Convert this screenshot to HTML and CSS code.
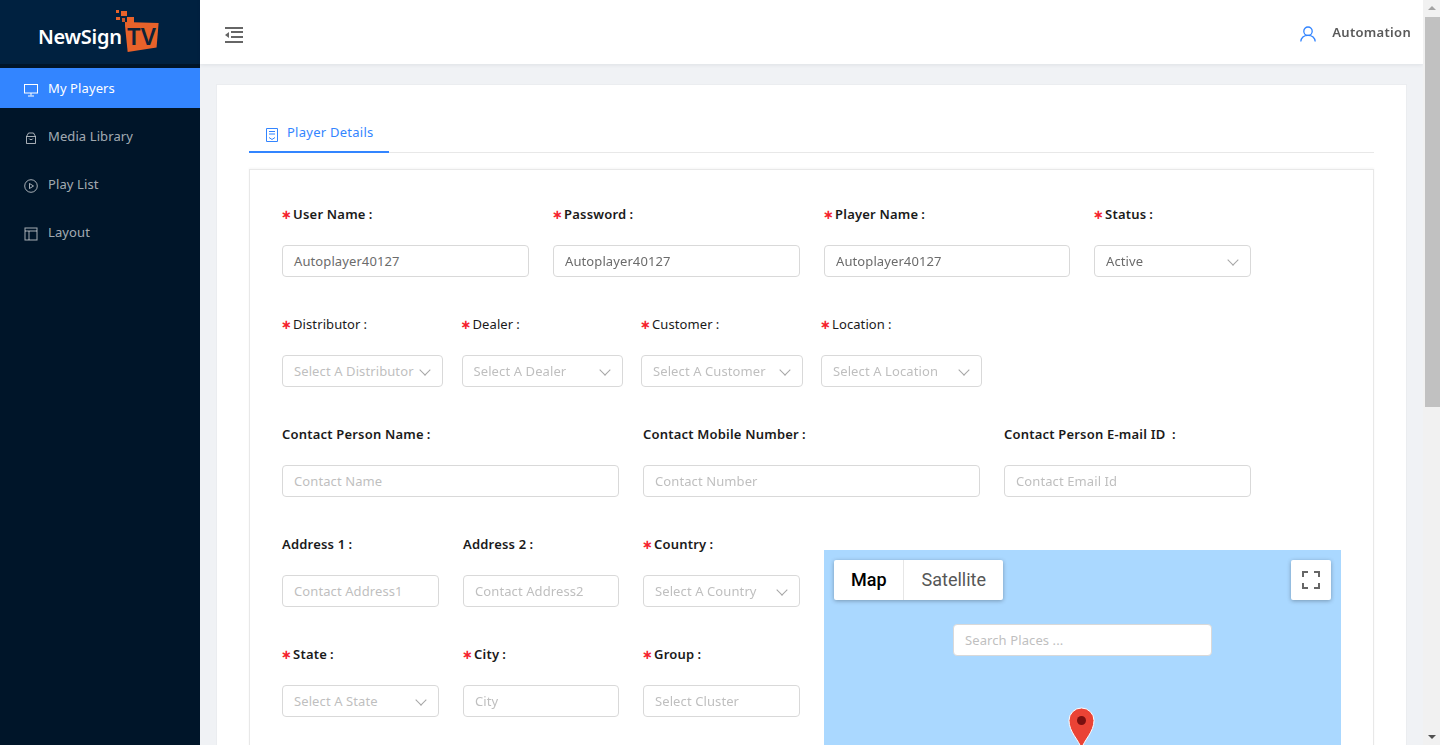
FILE: index.html
```html
<!DOCTYPE html>
<html lang="en">
<head>
    <meta charset="UTF-8">
    <meta name="viewport" content="width=device-width, initial-scale=1.0">
    <title>Player Details</title>
    <link rel="stylesheet" href="styles.css">
</head>
<body>
    <aside class="sider">
        <div class="logo">
            <span class="logo-name">NewSign</span>
            <span class="logo-badge">TV</span>
            <svg class="logo-dots" width="18" height="14" viewBox="0 0 18 14">
                <rect x="0" y="0" width="3" height="3" fill="#e8622a"/>
                <rect x="5" y="1" width="6" height="5" fill="#e8622a"/>
                <rect x="0" y="7" width="4" height="3" fill="#e8622a"/>
                <rect x="6" y="8" width="3" height="4" fill="#c9562a"/>
                <rect x="11" y="7" width="7" height="7" fill="#e8622a"/>
            </svg>
        </div>
        <ul class="menu">
            <li class="menu-item active">
                <svg width="14" height="14" viewBox="0 0 14 14" fill="none" stroke="currentColor"><rect x=".5" y="1.5" width="13" height="8.5"/><path d="M7 10v2.500M4 13h6"/></svg>
                <span>My Players</span>
            </li>
            <li class="menu-item">
                <svg width="14" height="14" viewBox="0 0 14 14" fill="none" stroke="currentColor"><path d="M2.500 5.500h9v7h-9zM2.500 5.500L4.500 2h5l2 3.500M5 7.500c.5 1.500 3.500 1.500 4 0"/></svg>
                <span>Media Library</span>
            </li>
            <li class="menu-item">
                <svg width="14" height="14" viewBox="0 0 14 14" fill="none" stroke="currentColor"><circle cx="7" cy="7" r="6.300"/><path d="M5.500 4.500L9.500 7l-4 2.500z"/></svg>
                <span>Play List</span>
            </li>
            <li class="menu-item">
                <svg width="14" height="14" viewBox="0 0 14 14" fill="none" stroke="currentColor"><rect x="1" y="1" width="12" height="12"/><path d="M1 4h12M5 4v9"/></svg>
                <span>Layout</span>
            </li>
        </ul>
    </aside>

    <div class="main">
        <header class="topbar">
            <svg class="fold-icon" width="18" height="16" viewBox="0 0 18 16" fill="#666"><path d="M0 0h18v2H0zM6 4h12v2H6zM6 9h12v2H6zM0 14h18v2H0zM0 8l4-3v6z"/></svg>
            <div class="user">
                <svg width="16" height="16" viewBox="0 0 16 16" fill="none" stroke="#3385ff" stroke-width="1.300"><circle cx="8" cy="5.200" r="4.200"/><path d="M.8 15.500c.4-4 3-6.200 7.200-6.200s6.800 2.200 7.200 6.200"/></svg>
                <span>Automation</span>
            </div>
        </header>

        <section class="content">
            <div class="tabs">
                <div class="tab">
                    <svg width="12" height="14" viewBox="0 0 12 14" fill="none" stroke="#3385ff"><path d="M.5.500h11v13H.5zM3 3.500h6M3 6h6M3 9.500l3 2 3-2"/></svg>
                    <span>Player Details</span>
                </div>
            </div>

            <form class="panel">
                <div class="row row-main">
                    <div class="field"><label class="bold req">User Name<i>:</i></label><div class="input filled">Autoplayer40127</div></div>
                    <div class="field"><label class="bold req">Password<i>:</i></label><div class="input filled">Autoplayer40127</div></div>
                    <div class="field"><label class="bold req">Player Name<i>:</i></label><div class="input filled">Autoplayer40127</div></div>
                    <div class="field"><label class="bold req">Status<i>:</i></label><div class="input filled select">Active</div></div>
                </div>
                <div class="row row-org">
                    <div class="field"><label class="req">Distributor<i>:</i></label><div class="input select">Select A Distributor</div></div>
                    <div class="field"><label class="req">Dealer<i>:</i></label><div class="input select">Select A Dealer</div></div>
                    <div class="field"><label class="req">Customer<i>:</i></label><div class="input select">Select A Customer</div></div>
                    <div class="field"><label class="req">Location<i>:</i></label><div class="input select">Select A Location</div></div>
                </div>
                <div class="row row-contact">
                    <div class="field"><label class="bold">Contact Person Name<i>:</i></label><div class="input">Contact Name</div></div>
                    <div class="field"><label class="bold">Contact Mobile Number<i>:</i></label><div class="input">Contact Number</div></div>
                    <div class="field"><label class="bold">Contact Person E-mail ID <i>:</i></label><div class="input">Contact Email Id</div></div>
                </div>
                <div class="row-split">
                    <div class="split-left">
                        <div class="field"><label class="bold">Address 1<i>:</i></label><div class="input">Contact Address1</div></div>
                        <div class="field"><label class="bold">Address 2<i>:</i></label><div class="input">Contact Address2</div></div>
                        <div class="field"><label class="bold req">Country<i>:</i></label><div class="input select">Select A Country</div></div>
                        <div class="field"><label class="bold req">State<i>:</i></label><div class="input select">Select A State</div></div>
                        <div class="field"><label class="bold req">City<i>:</i></label><div class="input">City</div></div>
                        <div class="field"><label class="bold req">Group<i>:</i></label><div class="input">Select Cluster</div></div>
                    </div>
                    <div class="map">
                        <div class="map-type">
                            <span class="map-btn on">Map</span>
                            <span class="map-btn">Satellite</span>
                        </div>
                        <div class="map-full">
                            <svg width="18" height="18" viewBox="0 0 18 18" fill="#666"><path d="M0 0h6v2H2v4H0zM12 0h6v6h-2V2h-4zM0 12h2v4h4v2H0zM16 12h2v6h-6v-2h4z"/></svg>
                        </div>
                        <div class="map-search">Search Places ...</div>
                        <svg class="map-pin" width="27" height="43" viewBox="0 0 27 43"><path d="M13.500 42C11 33 1 25 1 13.500a12.500 12.500 0 0 1 25 0C26 25 16 33 13.500 42z" fill="#ea4335" stroke="#fff" stroke-width="1"/><circle cx="13.500" cy="13.500" r="4.500" fill="#7a1010"/></svg>
                    </div>
                </div>
            </form>
        </section>
    </div>

    <div class="scrollbar">
        <span class="arrow-up"></span>
        <div class="scroll-track"><div class="scroll-thumb"></div></div>
        <span class="arrow-down"></span>
    </div>
</body>
</html>
```

FILE: styles.css
```css
*{
    box-sizing: border-box;
}
body{
    margin: 0;
    background: #f0f2f5;
    font-family: "Noto Sans", "Liberation Sans", sans-serif;
    font-size: 13px;
    letter-spacing: .1px;
    color: #595959;
}
.sider{
    position: fixed;
    left: 0;
    top: 0;
    bottom: 0;
    width: 200px;
    background: #001529;
}
.logo{
    position: relative;
    height: 64px;
    background: #002140;
    display: flex;
    align-items: center;
    padding: 10px 0 0 38px;
}
.logo-name{
    color: #fff;
    font-size: 20px;
    font-weight: 600;
    letter-spacing: -.3px;
    margin-top: -2px;
}
.logo-badge{
    width: 34px;
    height: 30px;
    margin-left: 3px;
    background: #e8622a;
    color: #0d2238;
    font-size: 24px;
    font-weight: 600;
    line-height: 28px;
    text-align: center;
    clip-path: polygon(0 0, 100% 3%, 94% 85%, 9% 100%);
}
.logo-dots{
    position: absolute;
    left: 116px;
    top: 10px;
}
.menu{
    list-style: none;
    margin: 4px 0 0;
    padding: 0;
}
.menu-item{
    height: 40px;
    margin-bottom: 8px;
    padding-left: 24px;
    display: flex;
    align-items: center;
    gap: 10px;
    color: rgba(255,255,255,.65);
}
.menu-item svg{
    flex: none;
    margin-top: 4px;
}
.menu-item.active{
    background: #3385ff;
    color: #fff;
}
.main{
    margin: 0 17px 0 200px;
    height: 1365px;
    padding-top: 64px;
}
.topbar{
    position: fixed;
    left: 200px;
    right: 17px;
    top: 0;
    height: 64px;
    background: #fff;
    box-shadow: 0 1px 4px rgba(0,21,41,.08);
    display: flex;
    align-items: center;
    justify-content: space-between;
    padding: 0 12px 0 25px;
}
.fold-icon{
    margin-top: 6px;
}
.user{
    display: flex;
    align-items: center;
    gap: 16px;
    margin-top: 4px;
    font-weight: 600;
    letter-spacing: .3px;
    color: #595959;
}
.user span{
    margin-top: -4px;
}
.content{
    margin: 20px 16px 0;
    background: #fff;
    border: 1px solid #ebedf0;
    padding: 32px 32px 40px;
}
.tabs{
    height: 36px;
    border-bottom: 1px solid #e8e8e8;
}
.tab{
    width: 140px;
    height: 36px;
    border-bottom: 2px solid #3385ff;
    color: #3385ff;
    letter-spacing: .25px;
    display: flex;
    align-items: flex-start;
    gap: 9px;
    padding: 6px 0 0 17px;
}
.tab svg{
    margin-top: 5px;
}
.panel{
    margin-top: 16px;
    border: 1px solid #e8e8e8;
    box-shadow: 0 -1px 2px rgba(0,0,0,.04);
    padding: 33px 32px 40px;
    height: 1000px;
}
.row{
    display: grid;
    column-gap: 24px;
    height: 110px;
}
.row-main{
    grid-template-columns: 247px 247px 246px 157px;
}
.row-org{
    grid-template-columns: 161px 161px 161.500px 161px;
    column-gap: 18.500px;
}
.row-contact{
    grid-template-columns: 337px 337px 247px;
}
.row-split{
    display: flex;
    gap: 24px;
}
.split-left{
    width: 518px;
    display: grid;
    grid-template-columns: 157px 156px 157px;
    grid-auto-rows: 110px;
    column-gap: 24px;
}
.field label{
    display: block;
    height: 42px;
    line-height: 22px;
    color: #1a1a1a;
    font-weight: 400;
}
.field label.bold{
    font-weight: 600;
    letter-spacing: .2px;
}
.field label i{
    font-style: normal;
    margin-left: 3px;
}
.req::before{
    content: "\2217";
    color: #f5222d;
    margin: 0 1px 0 -1px;
    font-family: "DejaVu Sans", sans-serif;
    font-weight: 700;
    font-size: 13px;
}
.input{
    position: relative;
    height: 32px;
    line-height: 30px;
    border: 1px solid #d9d9d9;
    border-radius: 4px;
    padding: 0 11px;
    color: #bfbfbf;
    background: #fff;
    white-space: nowrap;
    overflow: hidden;
}
.input.filled{
    color: #6b6b6b;
}
.select::after{
    content: "";
    position: absolute;
    right: 13px;
    top: 10px;
    width: 7px;
    height: 7px;
    border-right: 1px solid #a6a6a6;
    border-bottom: 1px solid #a6a6a6;
    transform: rotate(45deg);
}
.map{
    position: relative;
    width: 517px;
    height: 400px;
    margin-top: 17px;
    background: #aad8ff;
}
.map-type{
    position: absolute;
    left: 10px;
    top: 10px;
    height: 40px;
    display: flex;
    background: #fff;
    border-radius: 2px;
    box-shadow: 0 1px 4px rgba(0,0,0,.3);
    font-family: Roboto, sans-serif;
    font-size: 18px;
    letter-spacing: 0;
}
.map-btn{
    padding: 0 17px 0 18px;
    line-height: 40px;
    color: #565656;
}
.map-btn.on{
    padding: 0 16px 0 17px;
    color: #000;
    font-weight: 500;
    border-right: 1px solid #e6e6e6;
}
.map-full{
    position: absolute;
    right: 10px;
    top: 10px;
    width: 40px;
    height: 40px;
    background: #fff;
    border-radius: 2px;
    box-shadow: 0 1px 4px rgba(0,0,0,.3);
    display: flex;
    align-items: center;
    justify-content: center;
}
.map-search{
    position: absolute;
    left: 129px;
    top: 74px;
    width: 259px;
    height: 32px;
    line-height: 30px;
    background: #fff;
    border: 1px solid #d9d9d9;
    border-radius: 4px;
    padding: 0 11px;
    color: #bfbfbf;
}
.map-pin{
    position: absolute;
    left: 244px;
    top: 157px;
}
.scrollbar{
    position: fixed;
    right: 0;
    top: 0;
    bottom: 0;
    width: 17px;
    background: #f1f1f1;
    display: flex;
    flex-direction: column;
    align-items: center;
}
.arrow-up,
.arrow-down{
    flex: none;
    width: 0;
    height: 0;
    border-left: 4px solid transparent;
    border-right: 4px solid transparent;
}
.arrow-up{
    margin: 6px 0 7px;
    border-bottom: 4px solid #a3a3a3;
}
.arrow-down{
    margin: 7px 0 6px;
    border-top: 4px solid #505050;
}
.scroll-track{
    flex: 1;
    width: 100%;
}
.scroll-thumb{
    height: 390px;
    margin-left: 2px;
    background: #c1c1c1;
}
```
